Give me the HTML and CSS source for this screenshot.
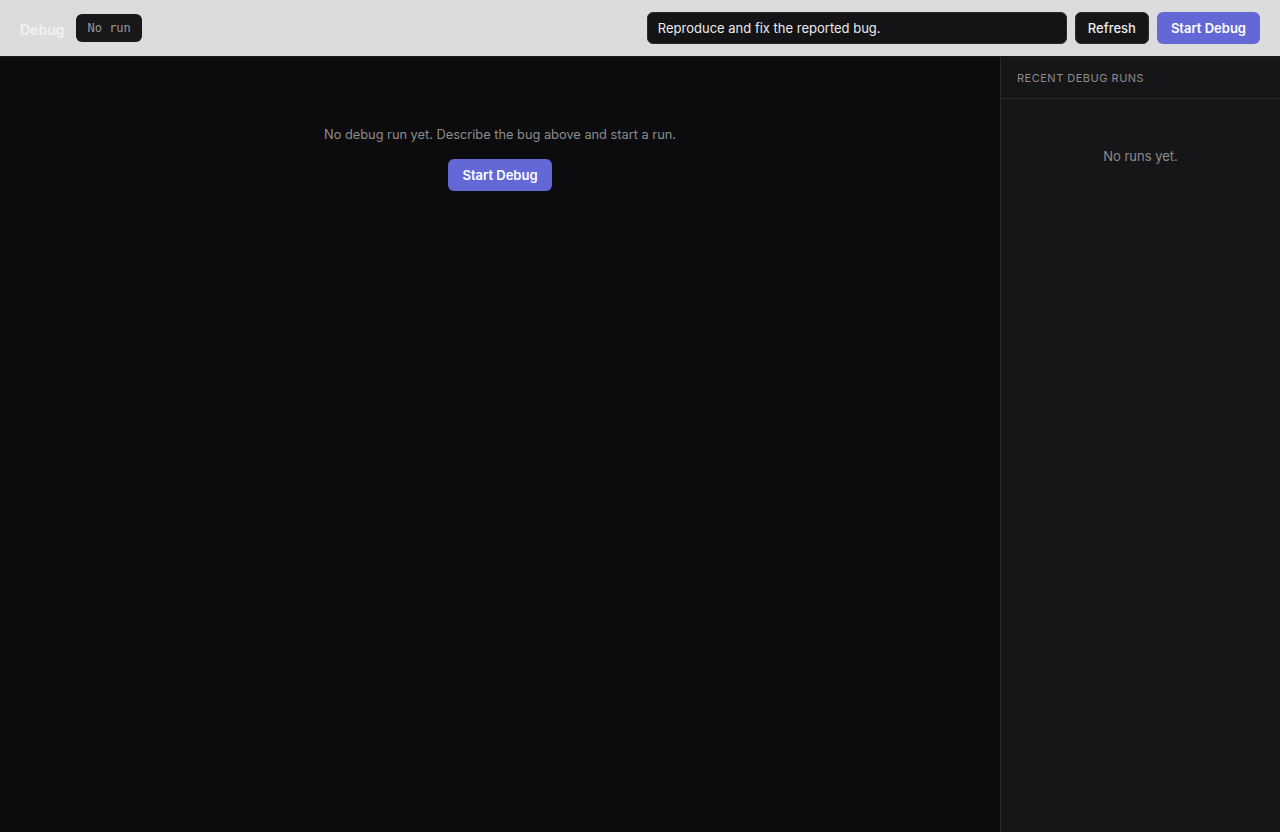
FILE: index.html
```html
<!DOCTYPE html>
<html lang="en">
<head>
<meta charset="utf-8">
<title>Debug</title>
<link rel="stylesheet" href="styles.css">
</head>
<body>
  <header class="topbar">
    <div class="topbar-left">
      <span class="title">Debug</span>
      <span class="status-badge">No run</span>
    </div>
    <div class="topbar-right">
      <input class="prompt-input" type="text" value="Reproduce and fix the reported bug.">
      <button class="btn btn-secondary">Refresh</button>
      <button class="btn btn-primary">Start Debug</button>
    </div>
  </header>
  <div class="layout">
    <main class="main">
      <div class="empty-state">
        <p class="empty-text">No debug run yet. Describe the bug above and start a run.</p>
        <button class="btn btn-primary">Start Debug</button>
      </div>
    </main>
    <aside class="sidebar">
      <div class="sidebar-header">Recent Debug Runs</div>
      <div class="sidebar-empty">No runs yet.</div>
    </aside>
  </div>
</body>
</html>
```

FILE: styles.css
```css
* {
  box-sizing: border-box;
}

html, body {
  margin: 0;
  height: 100%;
}

body {
  font-family: Inter, "Noto Sans", "Liberation Sans", sans-serif;
  background: #0c0c0e;
  color: #e6e6e6;
  display: flex;
  flex-direction: column;
}

.topbar {
  height: 57px;
  flex: 0 0 57px;
  background: #dcdcdc;
  border-bottom: 1px solid #1c1c1e;
  display: flex;
  align-items: center;
  justify-content: space-between;
  padding: 0 20px;
}

.topbar-left {
  display: flex;
  align-items: center;
  gap: 12px;
}

.title {
  font-size: 14px;
  font-weight: 600;
  color: #f2f2f2;
  padding-top: 2px;
}

.status-badge {
  font-family: "DejaVu Sans Mono", "Liberation Mono", monospace;
  font-size: 12px;
  color: #9a9a9a;
  background: #18181a;
  border-radius: 6px;
  height: 28px;
  padding: 0 11px;
  display: inline-flex;
  align-items: center;
}

.topbar-right {
  display: flex;
  align-items: center;
  gap: 8px;
}

.prompt-input {
  width: 420px;
  height: 32px;
  background: #141416;
  border: 1px solid #2c2c2f;
  border-radius: 6px;
  color: #ececec;
  font-family: inherit;
  font-size: 13px;
  padding: 0 10px;
  outline: none;
}

.btn {
  height: 32px;
  border: none;
  border-radius: 6px;
  font-family: inherit;
  font-size: 13px;
  font-weight: 600;
  padding: 0 14px;
  cursor: pointer;
}

.btn-secondary {
  background: #161618;
  color: #ececec;
  font-weight: 500;
  border: 1px solid #2c2c2f;
  padding: 0 12px;
}

.btn-primary {
  background: #6467d6;
  color: #ffffff;
}

.layout {
  flex: 1;
  display: flex;
  min-height: 0;
}

.main {
  flex: 1;
  background: #0c0c0e;
}

.empty-state {
  display: flex;
  flex-direction: column;
  align-items: center;
  gap: 17px;
  padding-top: 70px;
}

.empty-text {
  margin: 0;
  font-size: 12.8px;
  color: #8c8c8c;
}

.sidebar {
  width: 280px;
  flex: 0 0 280px;
  background: #161618;
  border-left: 1px solid #2a2a2d;
}

.sidebar-header {
  height: 42px;
  display: flex;
  align-items: center;
  padding: 0 16px;
  font-size: 11px;
  text-transform: uppercase;
  letter-spacing: 0.5px;
  color: #8c8c8c;
  border-bottom: 1px solid #2a2a2d;
}

.sidebar-empty {
  text-align: center;
  font-size: 13px;
  color: #8c8c8c;
  padding-top: 49px;
}
```
